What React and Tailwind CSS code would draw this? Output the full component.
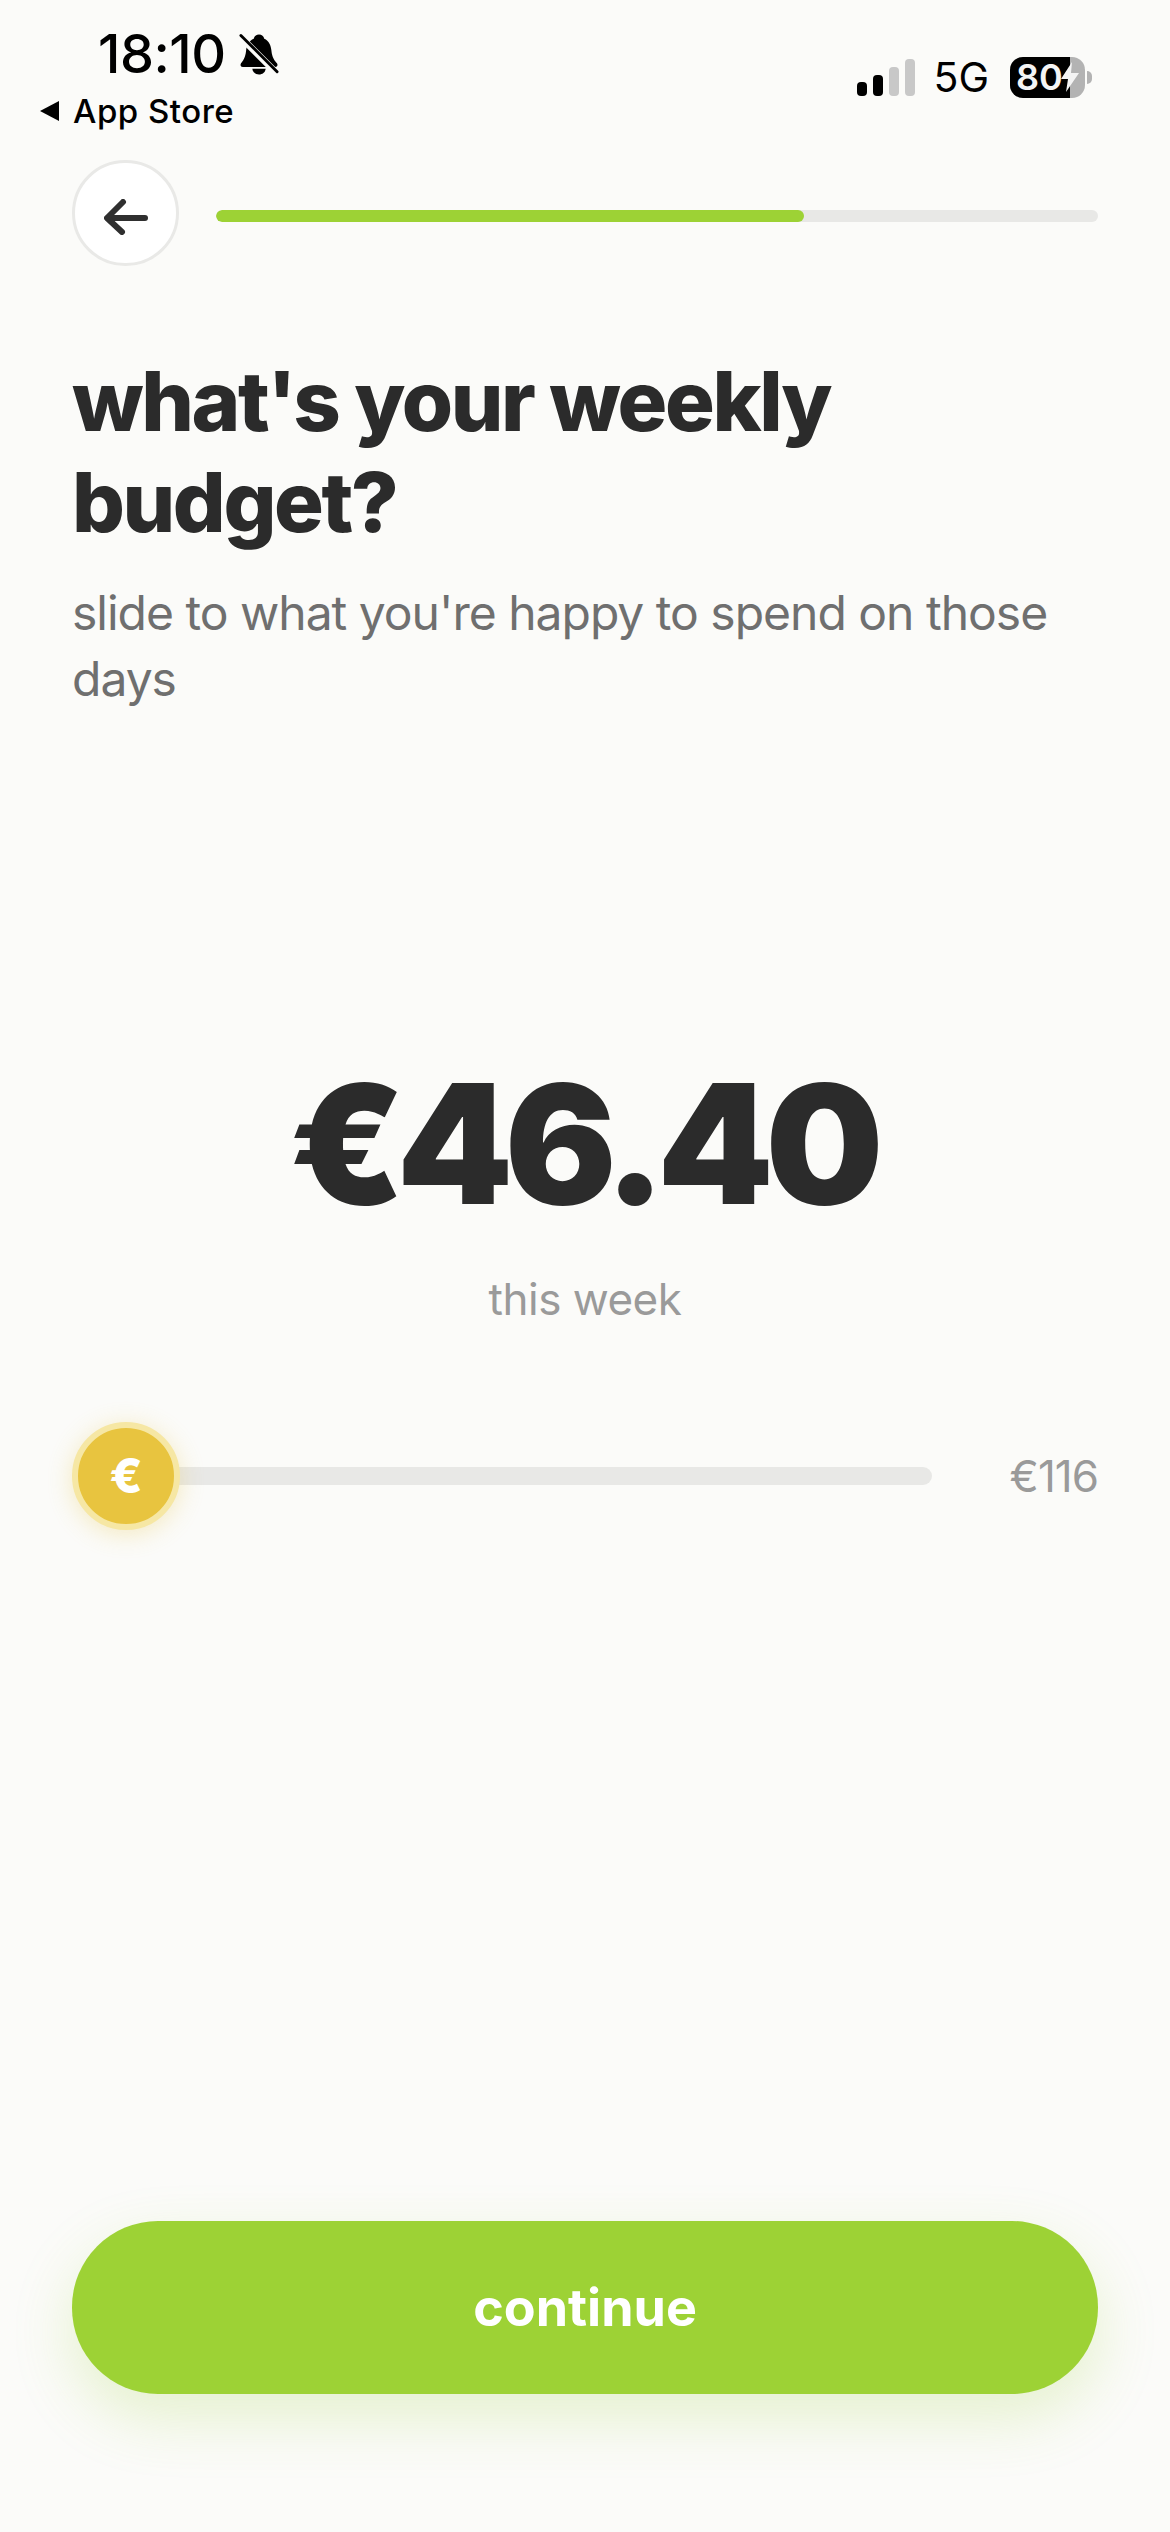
const SignalBars = () => (
  <svg width="58" height="37" viewBox="0 0 58 37">
    <rect x="0" y="23" width="10" height="14" rx="4" fill="#000" />
    <rect x="16" y="16" width="10" height="21" rx="4" fill="#000" />
    <rect x="32" y="8" width="10" height="29" rx="4" fill="#c8c8c8" />
    <rect x="48" y="0" width="10" height="37" rx="4" fill="#c8c8c8" />
  </svg>
);

const MutedBell = () => (
  <svg width="40" height="43" viewBox="0 0 42 44">
    <path d="M21 1c3 0 5 2 5.500 4.500 5 2 7 7 7.500 12 .5 5 1.500 9 6 14 1 2 0 3.500-2 3.500H4c-2 0-3-1.500-2-3.500 4-5 5-9 5.500-14 .5-5 3-10 8-12C16 3 18 1 21 1z" fill="#000" />
    <path d="M14 37h14c-.5 4-3.500 6-7 6s-6.500-2-7-6z" fill="#000" />
    <path d="M1 3l39 39" stroke="#fbfbf9" strokeWidth="7" />
    <path d="M2 2l38 38" stroke="#000" strokeWidth="3" strokeLinecap="round" />
  </svg>
);

const BackArrow = () => (
  <svg width="44" height="36" viewBox="0 0 44 36" fill="none" stroke="#2f2f2f" strokeWidth="6" strokeLinecap="round" strokeLinejoin="round">
    <path d="M41 19H4" />
    <path d="M19 3L3 19l15 14" />
  </svg>
);

const Battery = () => (
  <div className="flex items-center">
    <div className="relative w-[75px] h-[41px] rounded-[13px] bg-[#b3b3b3] overflow-hidden">
      <div className="absolute left-0 top-0 bottom-0 w-[60px] bg-black" />
      <div className="relative flex items-center h-full pl-[6px] text-[36px] leading-none font-semibold text-[#f4f4f4]">
        80
        <svg width="18" height="30" viewBox="0 0 18 30" className="-ml-[2px] shrink-0">
          <path d="M11 0L0 17h7l-2 13L18 11h-8z" fill="#f4f4f4" />
        </svg>
      </div>
    </div>
    <div className="ml-[2px] w-[5px] h-[13px] rounded-r-full bg-[#b3b3b3]" />
  </div>
);

const App = () => {
  return (
    <div className="w-[1170px] h-[2532px] bg-[#fbfbf9] text-[#2b2b2b] flex flex-col font-['Inter',sans-serif]">
      <div className="h-[160px] shrink-0 flex justify-between">
        <div className="pt-[29px] pl-[39px]">
          <div className="flex items-center pl-[59px] h-[50px] gap-[13px] text-black">
            <span className="text-[54px] leading-none font-medium tracking-[-0.5px]">18:10</span>
            <MutedBell />
          </div>
          <div className="flex items-center mt-[12px] gap-[13px] text-black">
            <svg width="21" height="22" viewBox="0 0 21 22"><path d="M20 1v20L1 11z" fill="#000" /></svg>
            <span className="text-[33px] leading-[40px] font-medium tracking-[0.5px]">App Store</span>
          </div>
        </div>
        <div className="flex items-center h-[40px] mt-[57px] pr-[78px] text-black">
          <SignalBars />
          <span className="ml-[18px] mr-[21px] text-[41px] leading-none">5G</span>
          <Battery />
        </div>
      </div>

      <div className="flex items-center pl-[72px] pr-[72px] h-[106px] shrink-0 gap-[37px]">
        <button className="w-[107px] h-[106px] shrink-0 rounded-full bg-white border-[3px] border-[#e9e9e7] flex items-center justify-center pt-[8px]">
          <BackArrow />
        </button>
        <div className="flex-1 h-[12px] mt-[6px] rounded-full bg-[#e8e8e6] overflow-hidden">
          <div className="h-full w-[588px] rounded-full bg-[#9dd235]" />
        </div>
      </div>

      <div className="px-[72px] mt-[85px]">
        <h1 className="text-[83px] leading-[101px] font-extrabold tracking-[-2.4px] text-[#2b2b2b]">
          what's your weekly budget?
        </h1>
        <p className="mt-[27px] text-[48px] leading-[66px] tracking-[-1px] text-[#6f6f6f]">
          slide to what you're happy to spend on those days
        </p>
      </div>

      <div className="mt-[332px] flex flex-col items-center">
        <div className="text-[166px] leading-[200px] font-black tracking-[-8.5px] pr-[6px] text-[#2b2b2b]">€46.40</div>
        <div className="mt-[27px] text-[44px] leading-[56px] tracking-[-0.5px] text-[#9a9a9a]">this week</div>
      </div>

      <div className="mt-[123px] flex items-center pl-[72px] pr-[72px]">
        <div className="relative flex-1 flex items-center">
          <div className="w-full h-[18px] rounded-full bg-[#e8e8e6]" />
          <div className="absolute left-0 w-[108px] h-[108px] rounded-full bg-[#e8c43f] border-[6px] border-[#f6e7a4] shadow-[0_4px_24px_rgba(232,196,63,0.3)] flex items-center justify-center text-white text-[48px] font-extrabold">
            €
          </div>
        </div>
        <div className="ml-[78px] text-[44px] leading-[52px] text-[#9a9a9a] tracking-[-1px]">€116</div>
      </div>

      <div className="mt-auto px-[72px] pb-[138px]">
        <button className="w-full h-[173px] rounded-[86px] bg-[#9dd235] text-white text-[52px] font-bold shadow-[0_24px_60px_rgba(157,210,53,0.22)]">
          continue
        </button>
      </div>
    </div>
  );
};

export default App;
